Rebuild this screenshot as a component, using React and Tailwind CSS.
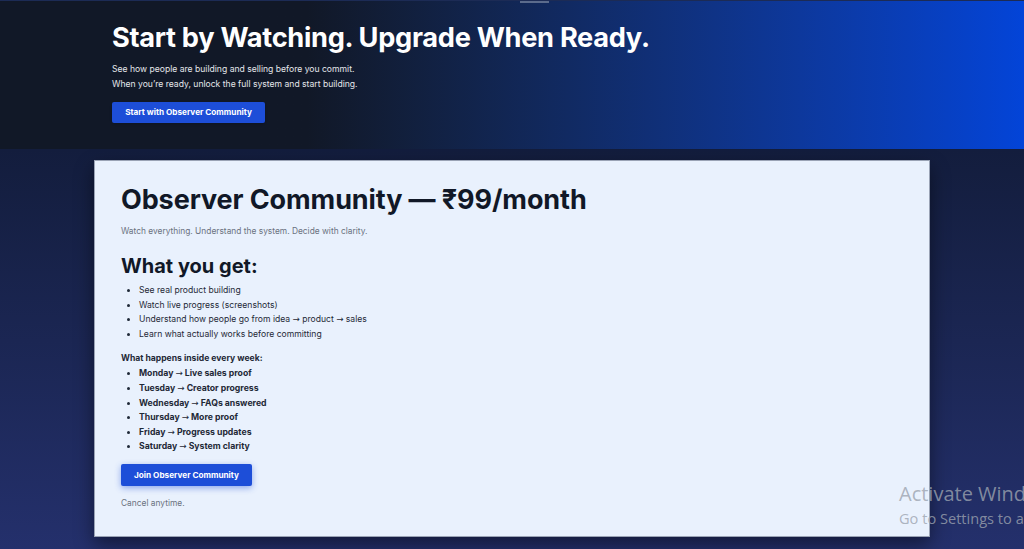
import React from "react";

const perks = [
  "See real product building",
  "Watch live progress (screenshots)",
  ["Understand how people go from idea ", " product ", " sales"],
  "Learn what actually works before committing",
];

const week = [
  ["Monday", "Live sales proof"],
  ["Tuesday", "Creator progress"],
  ["Wednesday", "FAQs answered"],
  ["Thursday", "More proof"],
  ["Friday", "Progress updates"],
  ["Saturday", "System clarity"],
];

const Arrow = () => <span className="font-['DejaVu_Sans',sans-serif] font-normal">→</span>;

export default function App() {
  return (
    <div className="relative h-[549px] w-[1024px] overflow-hidden font-['Inter',sans-serif]">
      {/* Hero */}
      <section className="relative h-[149px] bg-gradient-to-r from-[#111827] from-30% to-[#0344d8] border-t border-[#1c2b55]">
        <div className="absolute left-[520px] top-0 h-[2px] w-[29px] bg-[#5b6b8c]" />
        <div className="pl-[112px] pt-[20px]">
          <h1 className="text-[27.2px] leading-[34px] font-bold text-white tracking-[-0.3px]">
            Start by Watching. Upgrade When Ready.
          </h1>
          <p className="mt-[7px] text-[8.6px] leading-[15px] text-[#e5e7eb]">
            See how people are building and selling before you commit.
            <br />
            When you’re ready, unlock the full system and start building.
          </p>
          <button className="mt-[10px] h-[21px] w-[153px] rounded-[2px] bg-[#1d4ed8] text-[8.2px] font-bold text-white shadow-sm">
            Start with Observer Community
          </button>
        </div>
      </section>

      {/* Plan */}
      <section className="h-[400px] bg-gradient-to-b from-[#131d3d] to-[#24306c] pt-[11px]">
        <div className="ml-[94px] h-[377px] w-[836px] border border-[#9aa3b5] bg-[#e9f1fd] pl-[26px] pt-[22px] shadow-[0_8px_18px_rgba(0,0,0,0.45)]">
          <h2 className="text-[27px] leading-[34px] font-bold text-[#111827] tracking-[-0.1px]">
            Observer Community — ₹99/month
          </h2>
          <p className="mt-[8px] text-[8.4px] leading-[12px] text-[#6b7280]">
            Watch everything. Understand the system. Decide with clarity.
          </p>

          <h3 className="mt-[16px] text-[20px] leading-[26px] font-bold text-[#111827]">What you get:</h3>
          <ul className="mt-[4px] list-disc pl-[18px] text-[8.6px] leading-[14.6px] text-[#1f2937]">
            {perks.map((p, i) =>
              Array.isArray(p) ? (
                <li key={i}>
                  {p[0]}
                  <Arrow />
                  {p[1]}
                  <Arrow />
                  {p[2]}
                </li>
              ) : (
                <li key={i}>{p}</li>
              )
            )}
          </ul>

          <p className="mt-[11px] text-[8.6px] leading-[13px] font-bold text-[#1f2937]">
            What happens inside every week:
          </p>
          <ul className="mt-[1px] list-disc pl-[18px] text-[8.7px] leading-[14.6px] font-bold text-[#1f2937]">
            {week.map(([d, t]) => (
              <li key={d}>
                {d} <Arrow /> {t}
              </li>
            ))}
          </ul>

          <button className="mt-[10px] h-[22px] w-[131px] rounded-[2px] bg-[#1d4ed8] text-[8.2px] font-bold text-white shadow-[0_2px_6px_rgba(29,78,216,0.45)]">
            Join Observer Community
          </button>
          <p className="mt-[11px] text-[8.4px] leading-[12px] text-[#6b7280]">Cancel anytime.</p>
        </div>
      </section>

      {/* Windows watermark */}
      <div className="pointer-events-none absolute left-[899px] top-[480px] whitespace-nowrap font-['Open_Sans',sans-serif] text-[#9ca3af]/80">
        <div className="text-[20px] leading-[27px]">Activate Windows</div>
        <div className="text-[14.6px] leading-[23px]">Go to Settings to activate Windows.</div>
      </div>
    </div>
  );
}
